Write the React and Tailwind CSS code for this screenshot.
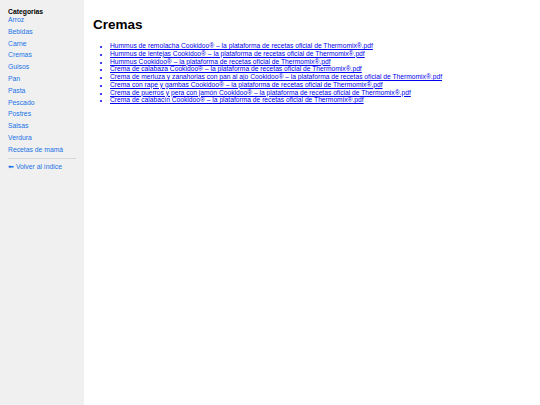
export default function App() {
  const cats = ["Arroz", "Bebidas", "Carne", "Cremas", "Guisos", "Pan", "Pasta", "Pescado", "Postres", "Salsas", "Verdura", "Recetas de mamá"];
  const items = [
    "Hummus de remolacha Cookidoo® – la plataforma de recetas oficial de Thermomix®.pdf",
    "Hummus de lentejas Cookidoo® – la plataforma de recetas oficial de Thermomix®.pdf",
    "Hummus Cookidoo® – la plataforma de recetas oficial de Thermomix®.pdf",
    "Crema de calabaza Cookidoo® – la plataforma de recetas oficial de Thermomix®.pdf",
    "Crema de merluza y zanahorias con pan al ajo Cookidoo® – la plataforma de recetas oficial de Thermomix®.pdf",
    "Crema con rape y gambas Cookidoo® – la plataforma de recetas oficial de Thermomix®.pdf",
    "Crema de puerros y pera con jamón Cookidoo® – la plataforma de recetas oficial de Thermomix®.pdf",
    "Crema de calabacín Cookidoo® – la plataforma de recetas oficial de Thermomix®.pdf",
  ];
  return (
    <div className="flex min-h-[405px] bg-white font-['Liberation_Sans',Arial,sans-serif]">
      <aside className="w-[84px] shrink-0 bg-[#f0f0f0] px-[8px] pt-[8px]">
        <div className="text-[6.8px] leading-[8px] font-bold text-black">Categorias</div>
        <ul>
          {cats.map((c) => (
            <li key={c} className="mb-[3.8px] text-[6.8px] leading-[8px]">
              <a href="#" className="text-[#1a73e8] no-underline">{c}</a>
            </li>
          ))}
        </ul>
        <div className="mt-[0px] h-[1.5px] w-[68px] bg-[#d8d8d8]" />
        <div className="mt-[4px] text-[6.8px] leading-[8px]">
          <a href="#" className="text-[#1a73e8]">⬅ Volver al índice</a>
        </div>
      </aside>
      <main className="flex-1 pl-[9px] pt-[17px]">
        <h1 className="text-[13.5px] leading-[16px] font-bold text-black">Cremas</h1>
        <ul className="mt-[9px] list-disc pl-[17px] marker:text-[5px]">
          {items.map((t) => (
            <li key={t} className="text-[6.7px] leading-[7.75px] text-[#0000ee]">
              <a href="#" className="underline text-[#0000ee]">{t}</a>
            </li>
          ))}
        </ul>
      </main>
    </div>
  );
}
